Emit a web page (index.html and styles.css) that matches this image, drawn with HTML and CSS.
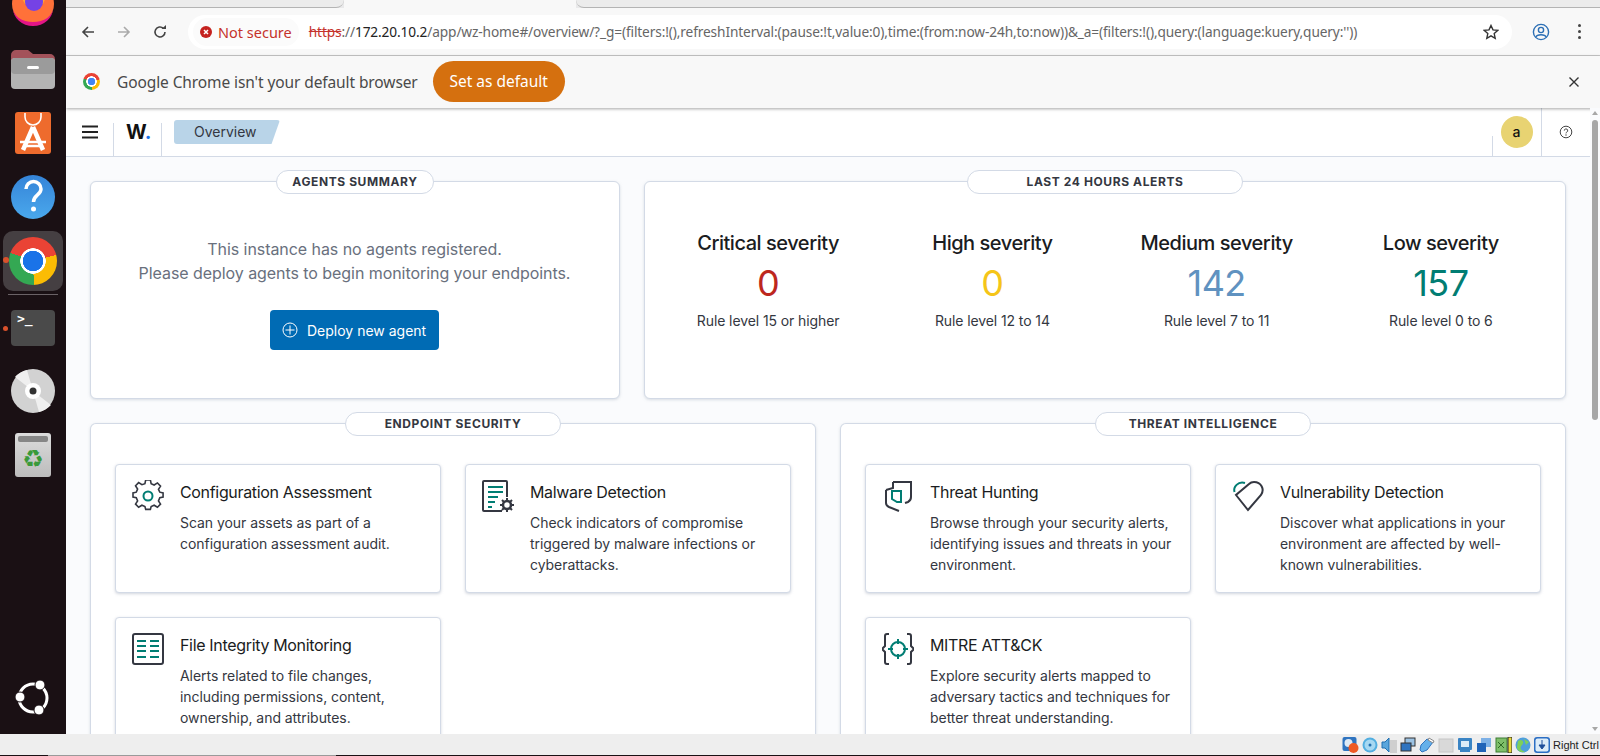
FILE: index.html
```html
<!DOCTYPE html>
<html lang="en">
<head>
<meta charset="utf-8">
<title>Wazuh overview</title>
<link rel="stylesheet" href="styles.css">
</head>
<body>
<div class="screen">
  <div class="desktop">
    <nav class="dock">
      <svg class="d-firefox" viewBox="0 0 44 44" width="44" height="44"><circle cx="22" cy="22" r="21" fill="#ff7139"/><path d="M2 26a20 18 0 0 0 40 0a20 14 0 0 1-40 0z" fill="#e31587"/><path d="M6 8a21 21 0 0 1 32 0l-6 14h-18z" fill="#ffa436"/><circle cx="23" cy="20" r="9" fill="#7542e5"/></svg>
      <svg class="d-files" viewBox="0 0 44 40" width="44" height="40"><path d="M0 6a5 5 0 0 1 5-5h12l5 4h17a5 5 0 0 1 5 5v10H0z" fill="#a3525a"/><rect y="9" width="44" height="31" rx="4" fill="#b4b4b4"/><rect y="9" width="44" height="16" rx="4" fill="#9b9b9b"/><rect x="16" y="17" width="12" height="3" rx="1.500" fill="#fff"/></svg>
      <svg class="d-store" viewBox="0 0 36 42" width="36" height="42"><rect width="36" height="42" rx="3" fill="#ee6b2d"/><path d="M10 1v4a8 8 0 0 0 16 0V1" fill="none" stroke="#fff" stroke-width="1.600"/><path d="M18 15L8 38M18 15l10 23" stroke="#fff" stroke-width="4.500" fill="none"/><path d="M5 30h26M8 34h20" stroke="#fff" stroke-width="2.500"/></svg>
      <svg class="d-help" viewBox="0 0 44 44" width="44" height="44"><defs><linearGradient id="hb" x1="0" y1="0" x2="0" y2="1"><stop offset="0" stop-color="#3584d8"/><stop offset="1" stop-color="#4aa8ec"/></linearGradient></defs><circle cx="22" cy="22" r="22" fill="url(#hb)"/><path d="M15 14a7.500 7.500 0 0 1 15 0c0 6-7.500 6-7.500 13" fill="none" stroke="#fff" stroke-width="3.500"/><circle cx="22.500" cy="34" r="2.500" fill="#fff"/></svg>
      <div class="chrome-tile"><span class="chrome-dot"></span><span class="chrome-logo"></span></div>
      <div class="dock-sep"></div>
      <div class="terminal"><span class="term-dot"></span><span class="term-prompt">&gt;_</span></div>
      <svg class="d-cd" viewBox="0 0 44 44" width="44" height="44"><circle cx="22" cy="22" r="22" fill="#d2d2d2"/><path d="M22 22L4 8a22 22 0 0 1 12-7zM22 22l18 14a22 22 0 0 1-12 7z" fill="#efefef"/><circle cx="22" cy="22" r="8" fill="#fff"/><circle cx="22" cy="22" r="3.500" fill="#333"/></svg>
      <div class="trash"><span class="trash-bar"></span><span class="trash-glyph">♻</span></div>
      <svg class="d-ubuntu" viewBox="0 0 36 36" width="36" height="36"><circle cx="18" cy="18" r="14" fill="none" stroke="#fff" stroke-width="3"/><circle cx="25" cy="5" r="5" fill="#fff" stroke="#1a1014" stroke-width="1"/><circle cx="5" cy="17" r="5" fill="#fff" stroke="#1a1014" stroke-width="1"/><circle cx="24" cy="30" r="5" fill="#fff" stroke="#1a1014" stroke-width="1"/></svg>
    </nav>
    <div class="browser">
      <div class="tabstrip">
        <div class="tab-inactive tab-left"></div>
        <div class="tab-active"></div>
        <div class="tab-inactive tab-right"></div>
      </div>
      <div class="toolbar">
        <svg class="tb-icon" viewBox="0 0 16 16" width="16" height="16"><path d="M14 8H3M8 3L3 8l5 5" fill="none" stroke="#444" stroke-width="1.600"/></svg>
        <svg class="tb-icon" viewBox="0 0 16 16" width="16" height="16"><path d="M2 8h11M8 3l5 5-5 5" fill="none" stroke="#aaa" stroke-width="1.600"/></svg>
        <svg class="tb-icon" viewBox="0 0 16 16" width="16" height="16"><path d="M13 8a5 5 0 1 1-1.600-3.700" fill="none" stroke="#444" stroke-width="1.600"/><path d="M9.500 5H14V1z" fill="#444"/></svg>
        <div class="omnibox">
          <span class="secure-chip">
            <svg viewBox="0 0 12 12" width="12" height="12"><circle cx="6" cy="6" r="6" fill="#c5221f"/><path d="M4 4l4 4M8 4l-4 4" stroke="#fff" stroke-width="1.500"/></svg>
            Not secure
          </span>
          <span class="url"><s class="scheme">https</s>://<b class="host">172.20.10.2</b>/app/wz-home#/overview/?_g=(filters:!(),refreshInterval:(pause:!t,value:0),time:(from:now-24h,to:now))&amp;_a=(filters:!(),query:(language:kuery,query:''))</span>
          <svg class="star" viewBox="0 0 16 16" width="16" height="16"><path d="M8 1.500l2 4.400 4.700.5-3.500 3.200 1 4.700L8 11.900l-4.200 2.400 1-4.700-3.500-3.200L6 5.900z" fill="none" stroke="#333" stroke-width="1.400"/></svg>
        </div>
        <svg class="profile" viewBox="0 0 18 18" width="18" height="18"><circle cx="9" cy="9" r="7.600" fill="none" stroke="#2c6fb5" stroke-width="1.400"/><circle cx="9" cy="7" r="2.600" fill="none" stroke="#2c6fb5" stroke-width="1.400"/><path d="M4 14c1-3 9-3 10 0" fill="none" stroke="#2c6fb5" stroke-width="1.400"/></svg>
        <span class="kebab"><i></i><i></i><i></i></span>
      </div>
      <div class="infobar">
        <span class="mini-chrome"></span>
        <span class="info-text">Google Chrome isn't your default browser</span>
        <button class="default-btn">Set as default</button>
        <svg class="info-close" viewBox="0 0 12 12" width="12" height="12"><path d="M1.500 1.500l9 9M10.500 1.500l-9 9" stroke="#333" stroke-width="1.400"/></svg>
      </div>
      <div class="app">
        <header class="wz-header">
          <div class="wz-burger"><svg viewBox="0 0 16 14" width="16" height="14"><path d="M0 1.500h16M0 7h16M0 12.500h16" stroke="#222" stroke-width="1.800"/></svg></div>
          <div class="wz-logo">W<span>.</span></div>
          <div class="wz-crumb">Overview</div>
          <div class="wz-avatar-cell"><span class="wz-avatar">a</span></div>
          <div class="wz-help"><svg viewBox="0 0 14 14" width="14" height="14"><circle cx="7" cy="7" r="5.800" fill="none" stroke="#444" stroke-width="1"/><path d="M5.300 5.600a1.700 1.700 0 1 1 2.500 1.500c-.6.300-.8.7-.8 1.300" fill="none" stroke="#444"/><circle cx="7" cy="10" r=".7" fill="#444"/></svg></div>
        </header>
        <div class="app-body">
          <main class="page">
            <div class="row-top">
              <section class="panel agents">
                <h2 class="pill">AGENTS SUMMARY</h2>
                <p class="empty-text">This instance has no agents registered.<br>Please deploy agents to begin monitoring your endpoints.</p>
                <button class="deploy"><svg viewBox="0 0 16 16" width="16" height="16"><circle cx="8" cy="8" r="7" fill="none" stroke="#fff"/><path d="M8 3.500v9M3.500 8h9" stroke="#fff"/></svg>Deploy new agent</button>
              </section>
              <section class="panel alerts">
                <h2 class="pill pill-wide">LAST 24 HOURS ALERTS</h2>
                <div class="stat"><div class="stat-title">Critical severity</div><div class="stat-num red">0</div><div class="stat-sub">Rule level 15 or higher</div></div>
                <div class="stat"><div class="stat-title">High severity</div><div class="stat-num yellow">0</div><div class="stat-sub">Rule level 12 to 14</div></div>
                <div class="stat"><div class="stat-title">Medium severity</div><div class="stat-num blue">142</div><div class="stat-sub">Rule level 7 to 11</div></div>
                <div class="stat"><div class="stat-title">Low severity</div><div class="stat-num green">157</div><div class="stat-sub">Rule level 0 to 6</div></div>
              </section>
            </div>
            <div class="row-bottom">
              <section class="panel modules">
                <h2 class="pill pill-endpoint">ENDPOINT SECURITY</h2>
                <article class="mod">
                  <svg class="mod-icon" viewBox="0 0 32 32" width="32" height="32"><path d="M13.500 1h5l.8 4 3.200 1.400 3.500-2.200 3.300 3.400-2.200 3.400L28.500 14l3.500.8v4.400l-3.500.8-1.400 3.300 2.200 3.400-3.300 3.400-3.500-2.200-3.200 1.400-.8 3h-5l-.8-3-3.200-1.400-3.500 2.200-3.300-3.400 2.200-3.400L3.500 20 0 19.200v-4.400L3.500 14l1.400-3.400-2.200-3.400L6 3.800l3.500 2.200L12.700 5z" transform="translate(1 -1) scale(.94)" fill="none" stroke="#343741" stroke-width="1.700"/><circle cx="16" cy="16" r="4.500" fill="none" stroke="#017d73" stroke-width="2"/></svg>
                  <div><h3>Configuration Assessment</h3><p>Scan your assets as part of a configuration assessment audit.</p></div>
                </article>
                <article class="mod">
                  <svg class="mod-icon" viewBox="0 0 32 32" width="32" height="32"><path d="M20 31H2a1 1 0 0 1-1-1V2a1 1 0 0 1 1-1h22a1 1 0 0 1 1 1v15" fill="none" stroke="#343741" stroke-width="2"/><path d="M6 7h15M6 12h15M6 17h10M6 22h7M6 27h4" stroke="#017d73" stroke-width="2"/><circle cx="25" cy="25" r="4" fill="none" stroke="#343741" stroke-width="2.500"/><path d="M25 18v3M25 29v3M18 25h3M29 25h3M20 20l2 2M28 28l2 2M30 20l-2 2M22 28l-2 2" stroke="#343741" stroke-width="2"/></svg>
                  <div><h3>Malware Detection</h3><p>Check indicators of compromise triggered by malware infections or cyberattacks.</p></div>
                </article>
                <article class="mod">
                  <svg class="mod-icon" viewBox="0 0 32 32" width="32" height="32"><rect x="1" y="1" width="30" height="30" rx="2" fill="none" stroke="#343741" stroke-width="2"/><path d="M5 8h9M18 8h9M5 13h9M18 13h9M5 18h9M18 18h9M5 24h9M18 24h9" stroke="#017d73" stroke-width="2"/></svg>
                  <div><h3>File Integrity Monitoring</h3><p>Alerts related to file changes, including permissions, content, ownership, and attributes.</p></div>
                </article>
              </section>
              <section class="panel modules">
                <h2 class="pill pill-threat">THREAT INTELLIGENCE</h2>
                <article class="mod">
                  <svg class="mod-icon" viewBox="0 0 32 32" width="32" height="32"><path d="M11 2h18v15c0 3-1 4-3 5l-3 1" fill="none" stroke="#343741" stroke-width="2"/><path d="M4 10v13c0 2 1 3 3 4l10 4" fill="none" stroke="#343741" stroke-width="2"/><path d="M4 10l7-2V2" fill="none" stroke="#343741" stroke-width="2"/><path d="M10 11h9v11h-4l-5-3z" fill="none" stroke="#017d73" stroke-width="2"/></svg>
                  <div><h3>Threat Hunting</h3><p>Browse through your security alerts, identifying issues and threats in your environment.</p></div>
                </article>
                <article class="mod">
                  <svg class="mod-icon" viewBox="0 0 32 32" width="32" height="32"><path d="M2.500 12C1 7 6 1 13 3" fill="none" stroke="#017d73" stroke-width="2"/><path d="M4 15l12 15 13-15c4-6 0-13-7-13-2 0-4 1-5 2L4 15z" fill="none" stroke="#343741" stroke-width="2"/></svg>
                  <div><h3>Vulnerability Detection</h3><p>Discover what applications in your environment are affected by well-known vulnerabilities.</p></div>
                </article>
                <article class="mod">
                  <svg class="mod-icon" viewBox="0 0 32 32" width="32" height="32"><path d="M7 1H5a2 2 0 0 0-2 2v10l-3 3 3 3v10a2 2 0 0 0 2 2h2M25 1h2a2 2 0 0 1 2 2v10l3 3-3 3v10a2 2 0 0 1-2 2h-2" fill="none" stroke="#343741" stroke-width="2"/><circle cx="16" cy="16" r="7" fill="none" stroke="#017d73" stroke-width="2"/><path d="M16 6v5M16 21v5M6 16h5M21 16h5" stroke="#017d73" stroke-width="2"/></svg>
                  <div><h3>MITRE ATT&amp;CK</h3><p>Explore security alerts mapped to adversary tactics and techniques for better threat understanding.</p></div>
                </article>
              </section>
            </div>
          </main>
          <div class="scrollbar"><span class="sb-up"></span><span class="sb-thumb"></span><span class="sb-down"></span></div>
        </div>
      </div>
    </div>
  </div>
  <footer class="vbox-bar">
    <div class="vbox-icons">
      <svg viewBox="0 0 16 16" width="17" height="16"><rect x="0" y="0" width="14" height="14" rx="2" fill="#2f74c0"/><circle cx="6" cy="6" r="4" fill="#dfeaf5"/><circle cx="11" cy="11" r="5" fill="#ee5a24"/></svg>
      <svg viewBox="0 0 16 16" width="16" height="16"><circle cx="8" cy="8" r="7.500" fill="#52aee0"/><circle cx="8" cy="8" r="5.500" fill="#a6d8f2"/><circle cx="8" cy="8" r="1.500" fill="#1f6fb0"/></svg>
      <svg viewBox="0 0 16 16" width="16" height="16"><rect x="9" y="3" width="7" height="13" fill="#cfcfcf"/><path d="M1 5h3l4-4v14l-4-4H1z" fill="#5aa6dc" stroke="#1f6fb0"/></svg>
      <svg viewBox="0 0 16 16" width="16" height="16"><rect x="5" y="1" width="10" height="8" fill="#9cc3e4" stroke="#333"/><rect x="1" y="6" width="10" height="8" fill="#2f74c0" stroke="#333"/></svg>
      <svg viewBox="0 0 16 16" width="16" height="16"><path d="M1 13l1-5 6-6 6 3-6 8-5 2z" fill="#64b0ea" stroke="#2f74c0"/><path d="M10 1l5 3-1 2-5-3z" fill="#fff" stroke="#888"/></svg>
      <svg viewBox="0 0 16 16" width="16" height="16"><rect x="1" y="2" width="14" height="13" fill="#d9d9d9" stroke="#c6c6c6"/></svg>
      <svg viewBox="0 0 16 16" width="16" height="16"><rect x="1" y="1" width="14" height="12" rx="1" fill="#3a84c4"/><rect x="4" y="4" width="8" height="6" fill="#dcecf8"/><rect x="3" y="13" width="10" height="2" fill="#3a84c4"/></svg>
      <svg viewBox="0 0 16 16" width="16" height="16"><rect x="5" y="1" width="10" height="9" fill="#7cb0e6"/><rect x="1" y="6" width="9" height="9" fill="#1f63b8"/></svg>
      <svg viewBox="0 0 17 16" width="17" height="16"><rect x="1" y="1" width="11" height="14" fill="#7fbf6a" stroke="#3d7d32"/><path d="M3 5l6 6M9 5l-6 6" stroke="#2e6a24"/><rect x="13" y="0" width="4" height="16" fill="#e8d83a" stroke="#222"/></svg>
      <svg viewBox="0 0 16 16" width="16" height="16"><circle cx="8" cy="8" r="7.500" fill="#4f9fdc"/><path d="M3 4c4-3 7 1 4 4s-1 6 3 6c-3 3-8 0-8-4z" fill="#7ed05a"/><path d="M9 2l5 3-3 3z" fill="#7ed05a"/></svg>
      <svg viewBox="0 0 16 16" width="16" height="16"><rect x="0" y="0" width="16" height="16" rx="3" fill="#2c6fc4"/><rect x="1.500" y="1.500" width="13" height="13" rx="2" fill="#dcecf8"/><path d="M8 3v6M5 8h6l-3 4z" stroke="#1f4f9a" fill="#1f4f9a"/></svg>
    </div>
    <span class="vbox-key">Right Ctrl</span>
  </footer>
  <div class="taskline"><span class="taskline-gap"></span></div>
</div>
</body>
</html>
```

FILE: styles.css
```css
* { box-sizing: border-box; }
html, body { margin: 0; height: 100%; overflow: hidden; }
body { font-family: "Inter", "Liberation Sans", sans-serif; color: #343741; background: #111; }
h2, h3, p { margin: 0; }
button { font: inherit; border: 0; }

.screen { width: 1600px; height: 756px; display: flex; flex-direction: column; }
.desktop { height: 734px; display: flex; }

/* dock */
.dock { width: 66px; flex: none; background: #1a1014; display: flex; flex-direction: column; align-items: center; overflow: hidden; }
.dock svg { flex: none; }
.d-firefox { margin-top: -18px; }
.d-files { margin-top: 23px; }
.d-store { margin-top: 23px; }
.d-help { margin-top: 21px; }
.chrome-tile { position: relative; flex: none; width: 60px; height: 60px; margin-top: 12px; border-radius: 10px; background: #453f42; display: flex; align-items: center; justify-content: center; }
.chrome-logo { width: 48px; height: 48px; border-radius: 50%; background: radial-gradient(circle, #1a73e8 0 10px, #fff 10.500px 12.500px, transparent 13px), conic-gradient(#ea4335 0 75deg, #fbbc04 75deg 178deg, #34a853 178deg 290deg, #ea4335 290deg); }
.chrome-dot { position: absolute; left: 0; top: 26px; width: 6px; height: 6px; border-radius: 50%; background: #d9512c; }
.dock-sep { width: 50px; height: 1px; margin-top: 3px; background: #6a6266; flex: none; }
.terminal { position: relative; flex: none; width: 44px; height: 36px; margin-top: 15px; border-radius: 4px; background: #4a4a4a; }
.term-prompt { display: block; padding-left: 6px; color: #fff; font: 700 13px/18px "DejaVu Sans Mono", monospace; }
.term-dot { position: absolute; left: -8px; top: 16px; width: 5px; height: 5px; border-radius: 50%; background: #d9512c; }
.d-cd { margin-top: 23px; }
.trash { flex: none; width: 36px; height: 44px; margin-top: 20px; border-radius: 3px; background: linear-gradient(#dcdcdc, #bcbcbc); padding: 3px 3px 0; text-align: center; }
.trash-bar { display: block; height: 6px; border-radius: 2px; background: #868686; }
.trash-glyph { display: block; margin-top: 2px; color: #3a9a3a; font: 24px/30px "DejaVu Sans", sans-serif; }
.d-ubuntu { margin-top: auto; margin-bottom: 18px; }

/* browser chrome */
.browser { flex: 1; min-width: 0; display: flex; flex-direction: column; }
.tabstrip { height: 8px; flex: none; display: flex; background: #e9e9ea; }
.tab-inactive { border-bottom: 1px solid #b4b4b4; background: #ececec; }
.tab-left { width: 278px; border-radius: 0 0 8px 0; }
.tab-active { width: 232px; background: #f8f8f8; }
.tab-right { flex: 1; border-radius: 0 0 0 8px; }
.toolbar { height: 48px; flex: none; display: flex; align-items: center; background: #f8f8f8; border-bottom: 1px solid #c8c8c8; padding-left: 14px; gap: 20px; }
.omnibox { width: 1324px; height: 34px; border-radius: 17px; background: #fff; display: flex; align-items: center; padding-left: 5px; }
.secure-chip { display: flex; align-items: center; gap: 6px; height: 28px; padding: 0 7px; border-radius: 14px; background: #fbfbfb; color: #c5332c; font: 14.500px "Noto Sans", sans-serif; white-space: nowrap; }
.url { margin-left: 10px; color: #666; font: 13.700px "Noto Sans", sans-serif; white-space: nowrap; letter-spacing: -.12px; flex: 1; }
.scheme { color: #c5332c; }
.host { font-weight: 400; color: #222; }
.star { margin-right: 13px; }
.profile { margin-left: 0; }
.kebab { display: flex; flex-direction: column; gap: 3px; margin-left: 8px; }
.kebab i { display: block; width: 3px; height: 3px; border-radius: 50%; background: #444; }
.infobar { height: 52px; flex: none; display: flex; align-items: center; padding: 0 0 1px 17px; background: #f8f8f8; box-shadow: 0 1px 3px rgba(0,0,0,.35); position: relative; }
.mini-chrome { width: 17px; height: 17px; border-radius: 50%; background: radial-gradient(circle, #4285f4 0 3.500px, #fff 4px 5px, transparent 5.500px), conic-gradient(#ea4335 0 75deg, #fbbc04 75deg 178deg, #34a853 178deg 290deg, #ea4335 290deg); }
.info-text { margin-left: 17px; font: 15.500px "Noto Sans", sans-serif; color: #4a4a4a; letter-spacing: -.1px; white-space: nowrap; }
.default-btn { margin-left: 15px; width: 132px; height: 41px; padding: 0 0 2px; border-radius: 21px; background: #d5700f; color: #fff; font: 15.500px "Noto Sans", sans-serif; }
.info-close { margin-left: auto; margin-right: 20px; }

/* app */
.app { flex: 1; min-height: 0; display: flex; flex-direction: column; background: #fafbfd; }
.wz-header { height: 49px; flex: none; display: flex; background: #fff; border-bottom: 1px solid #d3dae6; }
.wz-burger { width: 48px; display: flex; align-items: center; justify-content: center; background: linear-gradient(#d3dae6, #d3dae6) right bottom / 1px 33px no-repeat; }
.wz-logo { width: 48px; padding: 10px 0 0 12px; background: linear-gradient(#d3dae6, #d3dae6) right bottom / 1px 33px no-repeat; font: 700 20px/28px "Inter", sans-serif; color: #111; }
.wz-logo span { color: #1a73e8; }
.wz-crumb { width: 106px; height: 24px; margin: 12px 0 0 12px; padding: 0 0 0 20px; background: #b9d4e8; border-radius: 3px; clip-path: polygon(0 0, 100% 0, 92% 100%, 0 100%); font: 14px/24px "Inter", sans-serif; color: #343741; }
.wz-avatar-cell { width: 49px; margin-left: auto; display: flex; align-items: center; justify-content: center; background: linear-gradient(#d3dae6, #d3dae6) left bottom / 1px 20px no-repeat; }
.wz-avatar { width: 32px; height: 32px; border-radius: 50%; background: #e8d372; text-align: center; font: 500 14px/32px "Inter", sans-serif; color: #111; }
.wz-help { width: 48px; display: flex; align-items: center; justify-content: center; border-left: 1px solid #d3dae6; margin-right: 11px; }
.app-body { flex: 1; min-height: 0; display: flex; }
.page { flex: 1; min-width: 0; padding: 24px 24px 0; overflow: hidden; display: flex; flex-direction: column; gap: 24px; }
.scrollbar { width: 10px; flex: none; background: #fafbfd; margin-top: -49px; position: relative; display: flex; flex-direction: column; align-items: center; }
.sb-up { margin-top: 3px; border: 3px solid transparent; border-top: 0; border-bottom: 4px solid #a7a7a7; }
.sb-thumb { width: 6px; height: 300px; margin-top: 5px; background: #a7a7a7; border-radius: 3px; }
.sb-down { margin-top: auto; margin-bottom: 3px; border: 3px solid transparent; border-bottom: 0; border-top: 4px solid #a7a7a7; }

.panel { position: relative; background: #fff; border: 1px solid #d3dae6; border-radius: 6px; box-shadow: 0 1px 3px rgba(152,162,179,.35); }
.pill { position: absolute; top: -12px; left: 50%; transform: translateX(-50%); height: 24px; width: 158px; border: 1px solid #d3dae6; border-radius: 12px; background: #fff; text-align: center; font: 700 12px/22px "Inter", sans-serif; letter-spacing: .6px; color: #343741; white-space: nowrap; }
.pill-wide { width: 276px; }
.pill-endpoint { width: 216px; }
.pill-threat { width: 216px; }

.row-top { display: grid; grid-template-columns: 530px 922px; gap: 24px; flex: none; }
.row-bottom { display: grid; grid-template-columns: 726px 726px; gap: 24px; flex: 1; min-height: 0; }
.agents { height: 218px; padding: 55px 1px 0 0; display: flex; flex-direction: column; align-items: center; }
.empty-text { font-size: 16px; line-height: 24px; color: #69707d; text-align: center; letter-spacing: -.06px; }
.deploy { margin-top: 25px; width: 169px; height: 40px; border-radius: 4px; background: #006bb4; color: #fff; font: 14px "Inter", sans-serif; display: flex; align-items: center; padding-left: 12px; gap: 9px; }
.alerts { height: 218px; padding: 47px 12px 0 11px; display: grid; grid-template-columns: repeat(4, 1fr); align-items: start; }
.stat { text-align: center; }
.stat-title { font-size: 20px; line-height: 28px; font-weight: 500; color: #1a1c21; letter-spacing: -.47px; }
.stat-num { margin-top: 4px; font-size: 36px; line-height: 44px; font-weight: 400; letter-spacing: -.6px; }
.stat-sub { margin-top: 5px; font-size: 14px; line-height: 21px; color: #343741; letter-spacing: -.1px; }
.red { color: #bd271e; }
.yellow { color: #f5c518; }
.blue { color: #6092c0; }
.green { color: #017d73; }

.modules { padding: 40px 24px 0; display: grid; grid-template-columns: 326px 326px; grid-template-rows: 129px 180px; gap: 24px; border-bottom: 0; border-radius: 6px 6px 0 0; height: 400px; }
.mod { display: flex; gap: 16px; padding: 15px 12px 15px 16px; background: #fff; border: 1px solid #d3dae6; border-radius: 4px; box-shadow: 0 1px 3px rgba(152,162,179,.45); }
.mod-icon { flex: none; }
.mod h3 { font-size: 16px; line-height: 24px; font-weight: 400; color: #1a1c21; letter-spacing: -.33px; }
.mod p { margin-top: 8px; font-size: 14px; line-height: 21px; color: #343741; letter-spacing: -.05px; }

/* VirtualBox status bar */
.vbox-bar { height: 21px; flex: none; display: flex; align-items: center; justify-content: flex-end; background: #eeeeee; }
.vbox-icons { display: flex; gap: 3px; margin-right: 3px; }
.vbox-key { font: 11px "Liberation Sans", sans-serif; color: #222; width: 47px; white-space: nowrap; }
.taskline { height: 1px; flex: none; padding-left: 48px; background: #1a1014; }
.taskline-gap { display: block; width: 288px; height: 1px; background: #9a9a9a; }
```
